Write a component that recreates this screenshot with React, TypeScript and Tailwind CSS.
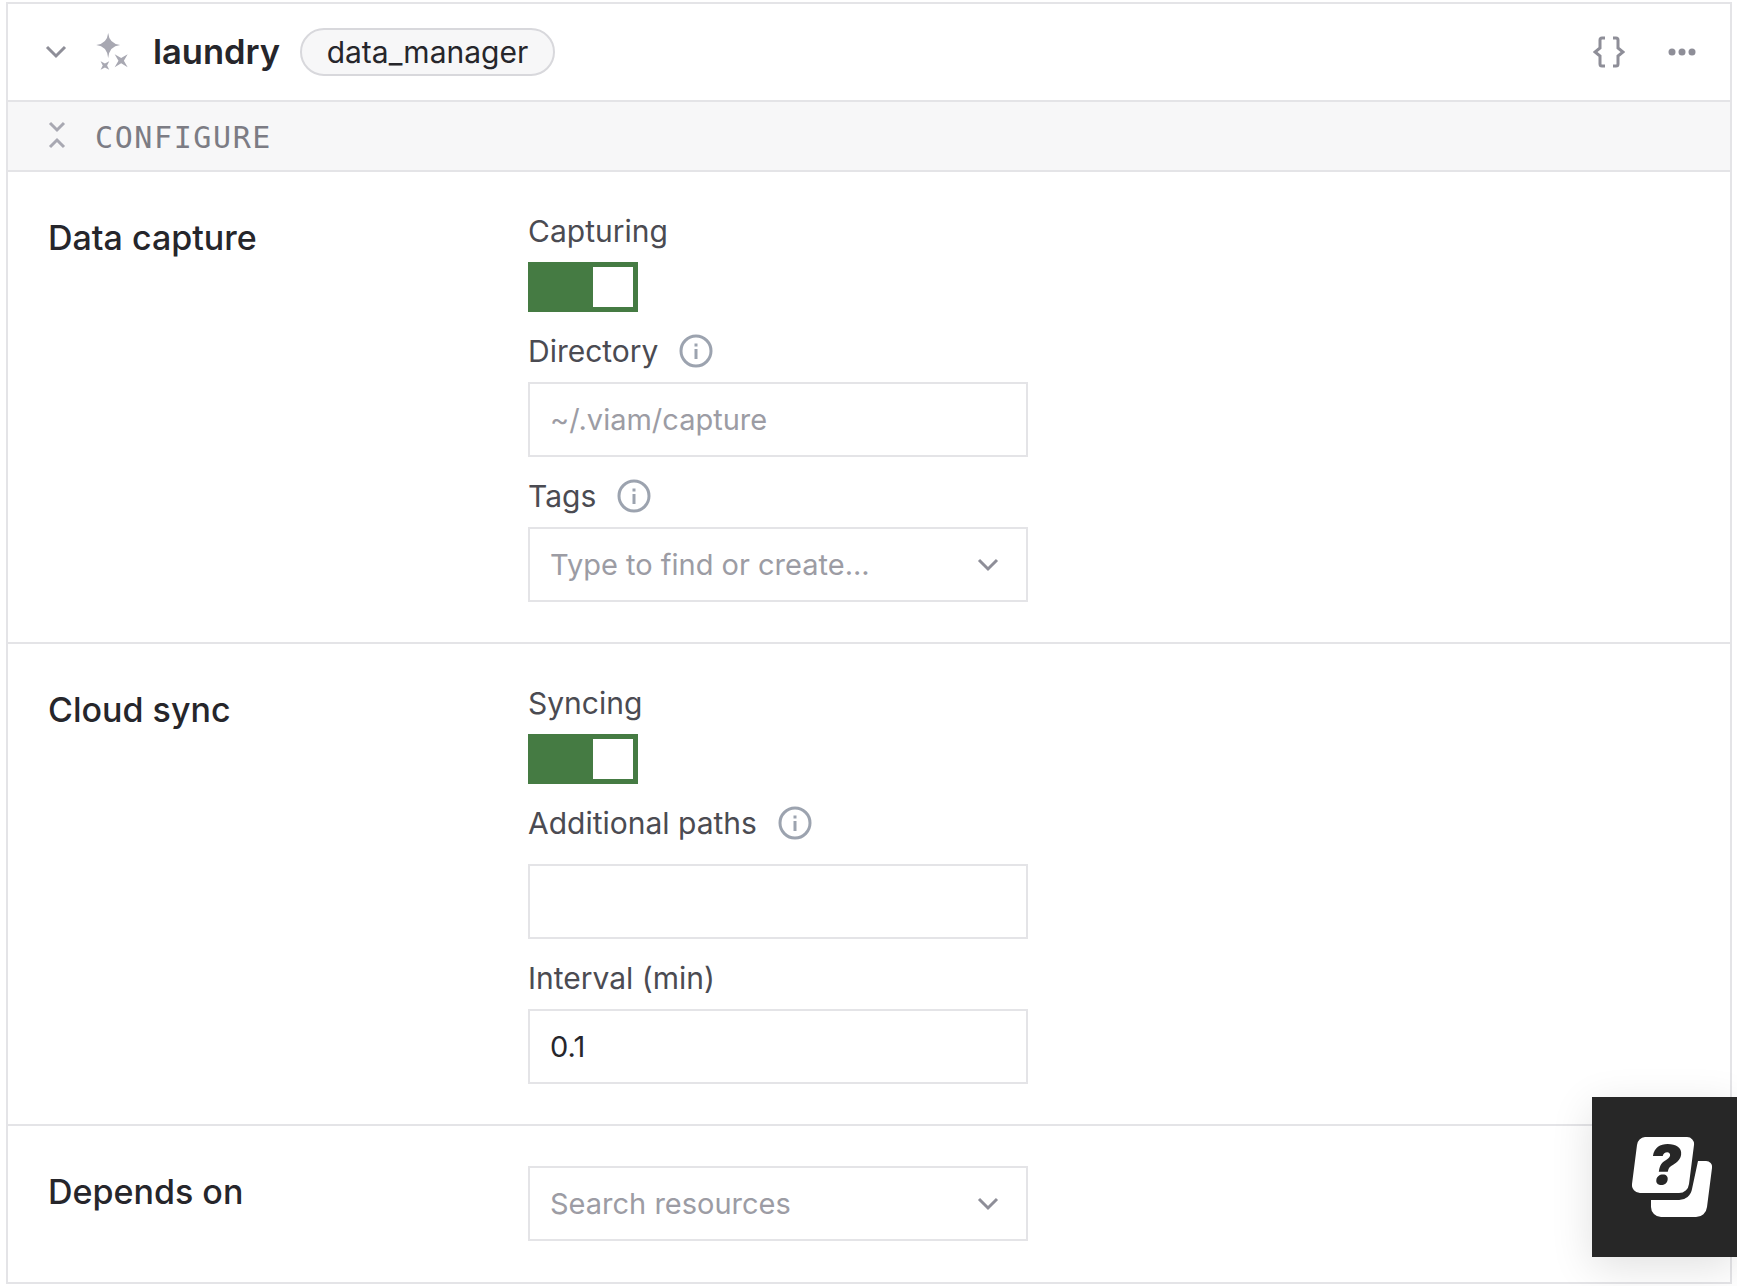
import React from "react";

const F = { fontFamily: '"Inter", "Liberation Sans", sans-serif' };

function Info() {
  return (
    <svg width="34" height="34" viewBox="0 0 34 34" fill="none" className="shrink-0">
      <circle cx="17" cy="17" r="15" stroke="#9ca3af" strokeWidth="3" />
      <rect x="15.500" y="15" width="3" height="10" fill="#9ca3af" />
      <rect x="15.500" y="9.500" width="3" height="3" fill="#9ca3af" />
    </svg>
  );
}

function Chevron({ size = 24 }: { size?: number }) {
  return (
    <svg width={size} height={size} viewBox="0 0 24 24" fill="none" stroke="#8e8e98" strokeWidth="3" className="shrink-0">
      <path d="M3 7l9 9 9-9" />
    </svg>
  );
}

function Toggle() {
  return (
    <div className="flex h-[50px] w-[110px] justify-end bg-[#457b43] p-[5px]">
      <div className="h-[40px] w-[40px] bg-white" />
    </div>
  );
}

function Label({ children, info }: { children: React.ReactNode; info?: boolean }) {
  return (
    <div className="flex h-[34px] items-center gap-[21px] text-[30px] leading-[34px] text-[#4b4b52]">
      <span>{children}</span>
      {info && <Info />}
    </div>
  );
}

function Field({ value, placeholder, chevron }: { value?: string; placeholder?: string; chevron?: boolean }) {
  return (
    <div className="flex h-[75px] w-[500px] items-center justify-between border-2 border-[#e4e4e7] bg-white pl-[20px] pr-[26px] text-[29px]">
      <span className={value ? "text-[#26262b]" : "text-[#9c9ca4]"}>{value ?? placeholder}</span>
      {chevron && <Chevron />}
    </div>
  );
}

function Section({ title, children, className }: { title: string; children: React.ReactNode; className?: string }) {
  return (
    <section className={"flex border-b-2 border-[#e4e4e7] " + (className ?? "")}>
      <h2 className="mt-[4px] w-[520px] shrink-0 pl-[40px] text-[34px] font-medium leading-[40px] text-[#26262b]">{title}</h2>
      <div className="flex flex-col">{children}</div>
    </section>
  );
}

export default function App() {
  return (
    <div className="relative h-[1286px] w-[1737px] overflow-hidden bg-white pl-[6px] pr-[5px] pt-[2px]" style={F}>
      <div className="border-2 border-[#e4e4e7]">
        <header className="flex h-[98px] items-center border-b-2 border-[#e4e4e7] pl-[36px] pr-[34px]">
          <Chevron />
          <svg width="33" height="39" viewBox="0 0 30 36" className="ml-[28px] shrink-0" fill="#a8a8b2">
            <path d="M11 0Q12 10 22 11Q12 12 11 23Q10 12 0 11Q10 10 11 0Z" />
            <path d="M17 19.500L23 23L29 19.500L25.500 25.500L29 31.500L23 28L17 31.500L20.500 25.500Z" />
            <path d="M4 26L8 28.200L12 26L10 30L12 34L8 31.800L4 34L6 30Z" />
          </svg>
          <h1 className="ml-[24px] text-[34.500px] font-semibold leading-[40px] text-[#26262b]">laundry</h1>
          <span className="ml-[20px] flex h-[48px] items-center rounded-full border-2 border-[#d8d8dc] bg-[#f7f7f8] px-[24.500px] text-[30px] text-[#26262b]">
            data_manager
          </span>
          <div className="ml-auto flex items-center gap-[43px]">
            <svg width="32" height="32" viewBox="0 0 32 32" fill="none" stroke="#8e8e98" strokeWidth="3">
              <path d="M12 2H9a2 2 0 0 0-2 2v8l-5 4 5 4v8a2 2 0 0 0 2 2h3" />
              <path d="M20 2h3a2 2 0 0 1 2 2v8l5 4-5 4v8a2 2 0 0 1-2 2h-3" />
            </svg>
            <svg width="28" height="8" viewBox="0 0 28 8" fill="#8e8e98">
              <circle cx="4" cy="4" r="3.500" />
              <circle cx="14" cy="4" r="3.500" />
              <circle cx="24" cy="4" r="3.500" />
            </svg>
          </div>
        </header>
        <div className="flex h-[70px] items-center border-b-2 border-[#e4e4e7] bg-[#f7f7f8] pl-[40px]">
          <svg width="18" height="28" viewBox="0 0 18 28" fill="none" stroke="#a8a8b2" strokeWidth="3" className="-mt-[2px] shrink-0">
            <path d="M2 2l7 7 7-7" />
            <path d="M2 26l7-7 7 7" />
          </svg>
          <span className="ml-[29px] mt-[2px] text-[30px] tracking-[1.6px] text-[#7c7c84]" style={{ fontFamily: '"DejaVu Sans Mono", monospace' }}>
            CONFIGURE
          </span>
        </div>
        <Section title="Data capture" className="h-[472px] pt-[42px]">
          <Label>Capturing</Label>
          <div className="mt-[14px]"><Toggle /></div>
          <div className="mt-[22px]"><Label info>Directory</Label></div>
          <div className="mt-[14px]"><Field placeholder="~/.viam/capture" /></div>
          <div className="mt-[22px]"><Label info>Tags</Label></div>
          <div className="mt-[14px]"><Field placeholder="Type to find or create..." chevron /></div>
        </Section>
        <Section title="Cloud sync" className="h-[482px] pt-[42px]">
          <Label>Syncing</Label>
          <div className="mt-[14px]"><Toggle /></div>
          <div className="mt-[22px]"><Label info>Additional paths</Label></div>
          <div className="mt-[24px]"><Field /></div>
          <div className="mt-[22px]"><Label>Interval (min)</Label></div>
          <div className="mt-[14px]"><Field value="0.1" /></div>
        </Section>
        <section className="flex h-[156px] pt-[40px]">
          <h2 className="mt-[6px] w-[520px] shrink-0 pl-[40px] text-[34px] font-medium leading-[40px] text-[#26262b]">Depends on</h2>
          <Field placeholder="Search resources" chevron />
        </section>
      </div>
      <div className="absolute bottom-[29px] right-0 flex h-[160px] w-[145px] items-center bg-[#272727] pl-[40px] shadow-[0_10px_40px_rgba(0,0,0,0.12)]">
        <svg width="80" height="100" viewBox="0 -10 80 100">
          <path d="M66 24h8a6 6 0 0 1 6 7l-5 39a11 11 0 0 1-11 10H29a10 10 0 0 1-10-10v-7h28a13 13 0 0 0 13-11z" fill="#fff" />
          <path d="M13 0h42a7 7 0 0 1 7 8l-5 39a10 10 0 0 1-10 9H8a8 8 0 0 1-8-9L5 8a9 9 0 0 1 8-8z" fill="#fff" />
          <text x="33" y="47" textAnchor="middle" fontSize="54" fontWeight="900" fontStyle="italic" fill="#272727" fontFamily="Inter, sans-serif">?</text>
        </svg>
      </div>
    </div>
  );
}
